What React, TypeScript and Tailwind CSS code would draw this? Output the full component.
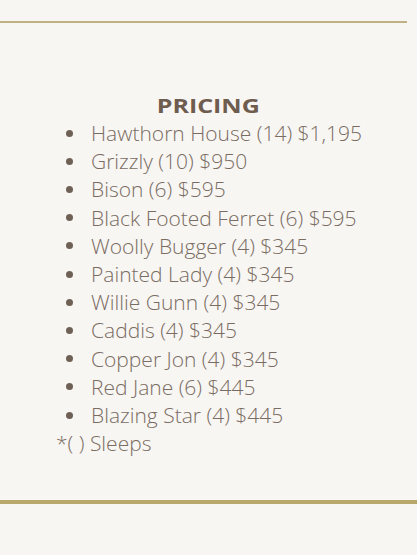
import React from "react";

const items = [
  "Hawthorn House (14) $1,195",
  "Grizzly (10) $950",
  "Bison (6) $595",
  "Black Footed Ferret (6) $595",
  "Woolly Bugger (4) $345",
  "Painted Lady (4) $345",
  "Willie Gunn (4) $345",
  "Caddis (4) $345",
  "Copper Jon (4) $345",
  "Red Jane (6) $445",
  "Blazing Star (4) $445",
];

export default function App() {
  return (
    <div
      className="w-[417px] h-[555px] bg-[#f7f6f3] flex flex-col overflow-hidden"
      style={{ fontFamily: '"Open Sans", sans-serif' }}
    >
      <div className="h-[21px]" />
      <div className="h-[2px] w-[407px] bg-[#bfb183]" />
      <div className="h-[70px]" />
      <h2 className="flex justify-center text-[20px] leading-[26px] font-bold text-[#6e5c4f]">
        <span className="inline-block scale-x-125">PRICING</span>
      </h2>
      <ul className="pl-[56px] text-[21px] leading-[28.2px] font-light text-[#7a6c62]">
        {items.map((t) => (
          <li key={t} className="flex items-center">
            <span className="w-[7px] h-[7px] rounded-full bg-[#6f6056] ml-[10px] mr-[18px]" />
            <span>{t}</span>
          </li>
        ))}
        <li>*( ) Sleeps</li>
      </ul>
      <div className="flex-1" />
      <div className="h-[4px] w-full bg-[#b9a86c] mb-[51px]" />
    </div>
  );
}
